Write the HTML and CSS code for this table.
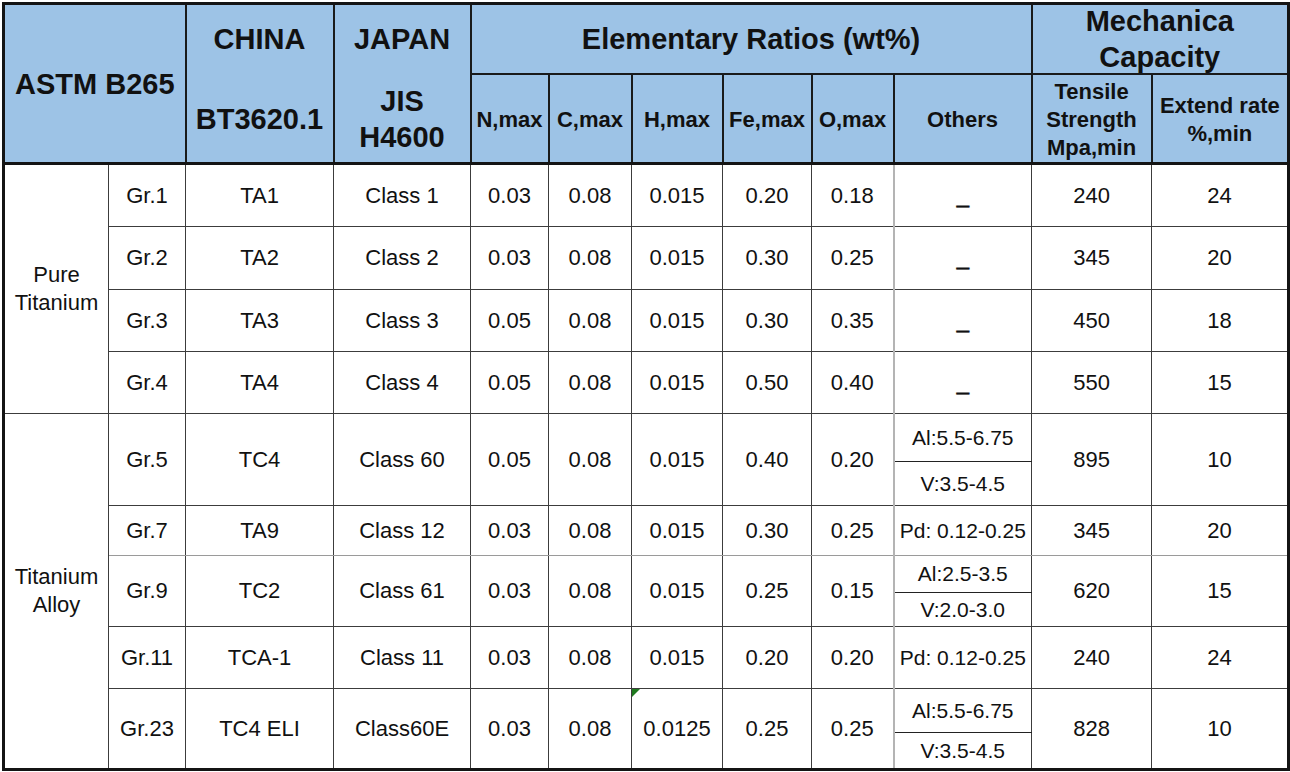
FILE: index.html
```html
<!DOCTYPE html>
<html>
<head>
<meta charset="utf-8">
<title>ASTM B265 Titanium Grades</title>
<link rel="stylesheet" href="styles.css">
</head>
<body>
<table class="spec">
  <colgroup>
    <col class="c-group"><col class="c-grade"><col class="c-china"><col class="c-japan">
    <col class="c-n"><col class="c-c"><col class="c-h"><col class="c-fe"><col class="c-o">
    <col class="c-oth"><col class="c-ts"><col class="c-ext">
  </colgroup>
  <thead>
    <tr class="h1">
      <th colspan="2" rowspan="2" class="big">ASTM B265</th>
      <th class="big split-top">CHINA</th>
      <th class="big split-top">JAPAN</th>
      <th colspan="6" class="big">Elementary Ratios (wt%)</th>
      <th colspan="2" class="big"><div class="stack">Mechanica<br>Capacity</div></th>
    </tr>
    <tr class="h2">
      <th class="big split-bot">BT3620.1</th>
      <th class="big split-bot">JIS<br>H4600</th>
      <th>N,max</th>
      <th>C,max</th>
      <th>H,max</th>
      <th>Fe,max</th>
      <th>O,max</th>
      <th class="oth">Others</th>
      <th>Tensile<br>Strength<br>Mpa,min</th>
      <th>Extend rate<br>%,min</th>
    </tr>
  </thead>
  <tbody>
    <tr class="r63">
      <td rowspan="4" class="group">Pure<br>Titanium</td>
      <td>Gr.1</td><td>TA1</td><td>Class 1</td>
      <td>0.03</td><td>0.08</td><td>0.015</td><td>0.20</td><td>0.18</td>
      <td class="oth dash">_</td><td>240</td><td>24</td>
    </tr>
    <tr class="r63">
      <td>Gr.2</td><td>TA2</td><td>Class 2</td>
      <td>0.03</td><td>0.08</td><td>0.015</td><td>0.30</td><td>0.25</td>
      <td class="oth dash">_</td><td>345</td><td>20</td>
    </tr>
    <tr class="r62">
      <td>Gr.3</td><td>TA3</td><td>Class 3</td>
      <td>0.05</td><td>0.08</td><td>0.015</td><td>0.30</td><td>0.35</td>
      <td class="oth dash">_</td><td>450</td><td>18</td>
    </tr>
    <tr class="r62">
      <td>Gr.4</td><td>TA4</td><td>Class 4</td>
      <td>0.05</td><td>0.08</td><td>0.015</td><td>0.50</td><td>0.40</td>
      <td class="oth dash">_</td><td>550</td><td>15</td>
    </tr>
    <tr class="r48 alloy-start">
      <td rowspan="8" class="group">Titanium<br>Alloy</td>
      <td rowspan="2">Gr.5</td><td rowspan="2">TC4</td><td rowspan="2">Class 60</td>
      <td rowspan="2">0.05</td><td rowspan="2">0.08</td><td rowspan="2">0.015</td><td rowspan="2">0.40</td><td rowspan="2">0.20</td>
      <td class="oth sub-top">Al:5.5-6.75</td><td rowspan="2">895</td><td rowspan="2">10</td>
    </tr>
    <tr class="r44">
      <td class="oth">V:3.5-4.5</td>
    </tr>
    <tr class="r50 light">
      <td>Gr.7</td><td>TA9</td><td>Class 12</td>
      <td>0.03</td><td>0.08</td><td>0.015</td><td>0.30</td><td>0.25</td>
      <td class="oth">Pd: 0.12-0.25</td><td>345</td><td>20</td>
    </tr>
    <tr class="r37">
      <td rowspan="2">Gr.9</td><td rowspan="2">TC2</td><td rowspan="2">Class 61</td>
      <td rowspan="2">0.03</td><td rowspan="2">0.08</td><td rowspan="2">0.015</td><td rowspan="2">0.25</td><td rowspan="2">0.15</td>
      <td class="oth sub-top">Al:2.5-3.5</td><td rowspan="2">620</td><td rowspan="2">15</td>
    </tr>
    <tr class="r34">
      <td class="oth">V:2.0-3.0</td>
    </tr>
    <tr class="r62">
      <td>Gr.11</td><td>TCA-1</td><td>Class 11</td>
      <td>0.03</td><td>0.08</td><td>0.015</td><td>0.20</td><td>0.20</td>
      <td class="oth">Pd: 0.12-0.25</td><td>240</td><td>24</td>
    </tr>
    <tr class="r44">
      <td rowspan="2">Gr.23</td><td rowspan="2">TC4 ELI</td><td rowspan="2">Class60E</td>
      <td rowspan="2">0.03</td><td rowspan="2">0.08</td><td rowspan="2" class="flagged"><span class="flag"></span>0.0125</td><td rowspan="2">0.25</td><td rowspan="2">0.25</td>
      <td class="oth sub-top">Al:5.5-6.75</td><td rowspan="2">828</td><td rowspan="2">10</td>
    </tr>
    <tr class="r37">
      <td class="oth">V:3.5-4.5</td>
    </tr>
  </tbody>
</table>
</body>
</html>
```

FILE: styles.css
```css
html, body {
  margin: 0;
  padding: 0;
  background: #ffffff;
}

body {
  padding: 2px 0 0 2px;
  font-family: "Liberation Sans", Arial, sans-serif;
  color: #111111;
}

.spec {
  border-collapse: collapse;
  table-layout: fixed;
  width: 1286px;
  border: 3px solid #141414;
}

.c-group { width: 105px; }
.c-grade { width: 77px; }
.c-china { width: 148px; }
.c-japan { width: 137px; }
.c-n { width: 78px; }
.c-c { width: 83px; }
.c-h { width: 91px; }
.c-fe { width: 89px; }
.c-o { width: 82px; }
.c-oth { width: 138px; }
.c-ts { width: 120px; }
.c-ext { width: 137px; }

th {
  background: #9dc3e6;
  font-weight: bold;
  font-size: 22px;
  line-height: 28px;
  padding: 0;
  text-align: center;
  vertical-align: middle;
  border: 2px solid #1a1a1a;
  color: #111111;
}

th.big {
  font-size: 29px;
  line-height: 36px;
}

.stack {
  line-height: 36px;
  margin: -4px 0;
}

.h1 { height: 70px; }
.h2 { height: 90px; }

.h2 th {
  border-bottom: 3px solid #141414;
  padding-top: 3px;
}

th[rowspan] {
  border-bottom: 3px solid #141414;
}

th.split-top {
  border-bottom-style: hidden;
}

th.split-bot {
  border-top-style: hidden;
}

td {
  font-size: 22px;
  line-height: 28px;
  padding: 0;
  text-align: center;
  vertical-align: middle;
  border: 1px solid #3c3c3c;
  white-space: nowrap;
}

td.oth {
  font-size: 21px;
  border-left: 2px solid #b4b4b4;
}

td.dash {
  font-size: 22px;
  -webkit-text-stroke: 0.6px #111111;
}

td.sub-top {
  border-bottom: 1px solid #222222;
}

.r63 { height: 63px; }
.r62 { height: 62px; }
.r50 { height: 50px; }
.r48 { height: 48px; }
.r44 { height: 44px; }
.r37 { height: 37px; }
.r34 { height: 34px; }

.light td {
  border-top-color: #9a9a9a;
  border-bottom-color: #9a9a9a;
}

.alloy-start td {
  border-top-color: #6a6a6a;
}

.flagged {
  position: relative;
}

.flag {
  position: absolute;
  left: 0;
  top: 0;
  width: 0;
  height: 0;
  border-top: 8px solid #1e7a1e;
  border-right: 8px solid transparent;
}
```
